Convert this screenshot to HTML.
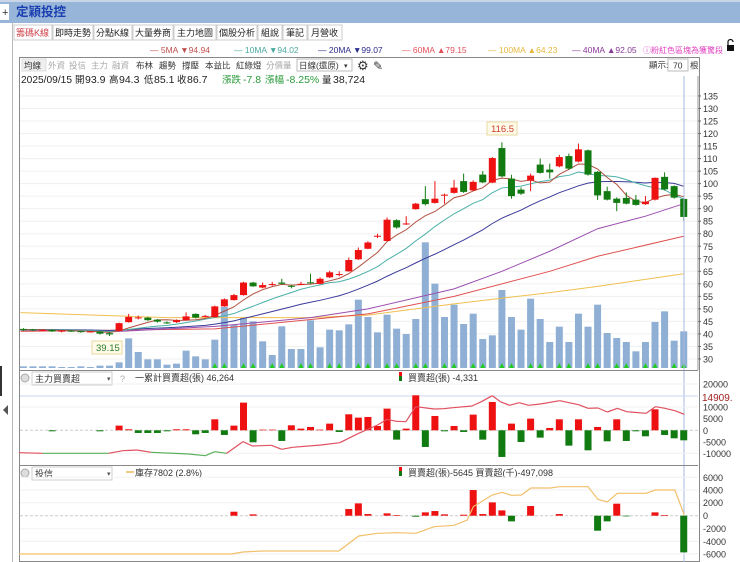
<!DOCTYPE html>
<html><head><meta charset="utf-8">
<style>
html,body{margin:0;padding:0;background:#fff;width:740px;height:562px;overflow:hidden;font-family:"Liberation Sans","Noto Sans CJK TC",sans-serif;}
svg text{font-family:"Liberation Sans","Noto Sans CJK TC",sans-serif;}
</style></head><body>
<svg id="s" width="740" height="562" xmlns="http://www.w3.org/2000/svg">
<rect x="0" y="0" width="740" height="23" fill="#97b5d9"/>
<rect x="0" y="0" width="740" height="2" fill="#c8d6e8"/>
<rect x="0" y="4" width="9" height="16" fill="#fff"/>
<text x="2" y="16" font-size="11" fill="#333">+</text>
<text x="16" y="16" font-size="12.5" font-weight="bold" fill="#1a3fb0">定穎投控</text>
<line x1="12.5" y1="23" x2="12.5" y2="562" stroke="#bbb"/>
<rect x="0" y="366" width="2" height="30" fill="#333"/>
<path d="M8 405 L3 410 L8 415Z" fill="#555"/>
<g font-size="9" fill="#222">
<rect x="14" y="25" width="38" height="15" fill="#fff" stroke="#ccc"/><text x="16" y="36" fill="#d0404a">籌碼K線</text>
<rect x="53" y="25" width="40" height="15" fill="#fff" stroke="#ccc"/><text x="55" y="36">即時走勢</text>
<rect x="94" y="25" width="38" height="15" fill="#fff" stroke="#ccc"/><text x="96" y="36">分點K線</text>
<rect x="133" y="25" width="40" height="15" fill="#fff" stroke="#ccc"/><text x="135" y="36">大量券商</text>
<rect x="174" y="25" width="42" height="15" fill="#fff" stroke="#ccc"/><text x="177" y="36">主力地圖</text>
<rect x="217" y="25" width="40" height="15" fill="#fff" stroke="#ccc"/><text x="219" y="36">個股分析</text>
<rect x="258" y="25" width="24" height="15" fill="#fff" stroke="#ccc"/><text x="261" y="36">組說</text>
<rect x="283" y="25" width="24" height="15" fill="#fff" stroke="#ccc"/><text x="286" y="36">筆記</text>
<rect x="308" y="25" width="34" height="15" fill="#fff" stroke="#ccc"/><text x="311" y="36">月營收</text>
</g>
<g font-size="8.5">
<text x="150" y="53" fill="#c0504d">—   5MA ▼94.94</text>
<text x="234" y="53" fill="#4aa8a0">—   10MA ▼94.02</text>
<text x="318" y="53" fill="#2c2c8c">—   20MA ▼99.07</text>
<text x="402" y="53" fill="#e0505a">—   60MA ▲79.15</text>
<text x="488" y="53" fill="#e8b840">—   100MA ▲64.23</text>
<text x="572" y="53" fill="#8a3a9a">—   40MA ▲92.05</text>
<text x="643" y="53" fill="#e040c0" font-size="8">ⓘ粉紅色區塊為獲驚段</text>
</g>
<rect x="727" y="45" width="7" height="6" fill="#111"/><path d="M728 45 v-3 a2.5 2.5 0 0 1 5 0" fill="none" stroke="#111" stroke-width="1.2"/>
<rect x="19.5" y="57.5" width="680" height="504" fill="none" stroke="#888"/>
<g font-size="8.5" fill="#333">
<rect x="22" y="59" width="24" height="12" fill="#eee" stroke="#ddd"/><text x="24" y="68.5">均線</text>
<text x="48" y="68.5" fill="#aaa">外資</text><text x="69" y="68.5" fill="#aaa">投信</text><text x="91" y="68.5" fill="#aaa">主力</text><text x="112" y="68.5" fill="#aaa">融資</text>
<text x="136" y="68.5">布林</text><text x="159" y="68.5">趨勢</text><text x="182" y="68.5">撐壓</text><text x="205" y="68.5">本益比</text><text x="236" y="68.5">紅綠燈</text><text x="266" y="68.5" fill="#aaa">分價量</text>
<rect x="297" y="59" width="55" height="12" fill="#fff" stroke="#bbb"/><text x="299" y="68.5">日線(還原)</text><text x="344" y="68" font-size="7">▾</text>
<text x="357" y="70" font-size="13">⚙</text><text x="373" y="70" font-size="12">✎</text>
<text x="649" y="68">顯示:</text>
<rect x="668" y="59" width="20" height="12" fill="#fff" stroke="#bbb"/><text x="673" y="68.5">70</text><text x="690" y="68.5">根</text>
</g>
<g font-size="10.5" fill="#222">
<text x="21" y="83" textLength="51" lengthAdjust="spacingAndGlyphs">2025/09/15</text><text x="75" y="83" font-size="9.5">開</text><text x="85" y="83">93.9</text>
<text x="109" y="83" font-size="9.5">高</text><text x="119" y="83">94.3</text>
<text x="144" y="83" font-size="9.5">低</text><text x="154" y="83">85.1</text>
<text x="177" y="83" font-size="9.5">收</text><text x="187" y="83">86.7</text>
<text x="222" y="83" fill="#2a9a3a" font-size="9.5">漲跌</text><text x="243" y="83" fill="#2a9a3a">-7.8</text>
<text x="265" y="83" fill="#2a9a3a" font-size="9.5">漲幅</text><text x="286" y="83" fill="#2a9a3a">-8.25%</text>
<text x="322" y="83" font-size="9.5">量</text><text x="333" y="83">38,724</text>
</g>
<g id="g"></g>
</svg>
<script>
var g=document.getElementById('g');var h='';
function X(i){return 23.4+9.57*i;}
function Y(p){return 121+(125-p)*2.505;}
for(var p=30;p<=135;p+=5){var y=Y(p);h+='<line x1="20" x2="698" y1="'+y+'" y2="'+y+'" stroke="#f0f0f0"/>';h+='<text x="703" y="'+(y+3.5)+'" font-size="9" fill="#333">'+p+'</text><line x1="698" x2="701" y1="'+y+'" y2="'+y+'" stroke="#666"/>';}
h+='<line x1="698" y1="76" x2="698" y2="370" stroke="#999"/>';
var C=[[42,41.5,42.3,41.2],[41.8,41.5,42,41.2],[41.5,41.6,41.9,41.3],[41.6,41,41.8,40.8],[41,41.3,41.5,40.6],[41.3,41.1,41.5,40.8],[41.1,40.8,41.2,40.5],[40.8,41,41.2,40.6],[40.9,40.1,41,39.8],[40.3,39.8,40.6,39.15],[41.2,44.3,44.5,41],[44.7,46.8,48,44.5],[46.5,46.6,47.3,45.8],[46.5,45.5,46.8,45.2],[45.7,44.9,45.9,44.5],[44.6,44.5,45,44],[44.7,45.5,45.8,44.4],[45.5,47,48.6,45.3],[48,46.5,48.2,46.2],[46.8,47.2,47.6,46.6],[46.7,51,51.3,46.5],[51,53.8,54.2,50.8],[53.5,55.5,56,53.3],[55.5,60.5,60.8,55.3],[60.5,59,60.8,58.8],[58.5,59.5,60.5,58.2],[59.8,59.9,60.8,59.2],[60.5,60,62,59.8],[59.2,59,59.6,58.2],[59.8,60,60.8,59.5],[60.6,60.4,64,60],[60,62,62.6,59.8],[62.6,64.6,65.2,62.3],[63.8,63.9,65,63],[65,69.5,70.5,64.8],[69.8,73.5,74.5,69.5],[74,76.5,77,73.8],[79,79.2,80,78.3],[77.1,85.6,86.5,77],[85.4,82.5,85.8,82],[84,84.1,87,83.5],[89.8,92,92.3,89.6],[93.8,91.8,99,91.3],[92.3,94,101,92],[95.5,95.6,96,92],[96.3,98.4,101.5,96],[101,96.7,104,96.3],[97.3,100.7,101.3,97],[103.6,100.5,105,100.2],[100.4,110.2,110.6,100.2],[114.2,102.9,116.5,102.5],[102,95,103.5,94],[97.6,96,98.5,95.5],[101.2,103.2,104,97],[107.6,104.3,110,104],[105.6,104.5,108,102],[106.9,110.6,111.5,106.5],[111,106,112,105.5],[108.8,113.7,116,108.5],[113.3,103.6,113.6,103.2],[104.7,95.3,105,93.5],[97,93.6,98.8,93.3],[94,92.3,94.5,89],[94.3,92,96.5,91.7],[93.6,91.5,95.5,91.2],[91.8,92.8,95,91.5],[93.6,102.3,102.5,93.3],[102.7,97.7,104.5,97.3],[99,94.4,99.3,94],[93.9,86.7,94.3,85.1]];
var V=[[770],[770],[770],[770],[772],[772],[770],[772],[768],[768],[758],[686],[727],[749],[749],[765],[762],[723],[740],[749],[690],[592],[645],[625],[635],[695],[736],[650],[718],[718],[632],[713],[660],[662],[644],[570],[622],[668],[615],[657],[673],[628],[398],[522],[622],[585],[643],[612],[688],[677],[541],[622],[660],[567],[628],[697],[651],[697],[612],[651],[585],[670],[685],[697],[725],[697],[637],[605],[693],[665]];
for(var i=0;i<70;i++){var t=V[i][0];var hh=(775-t)/3;h+='<rect x="'+(X(i)-3.5)+'" y="'+(368-hh)+'" width="7" height="'+hh+'" fill="#8fb0d4"/>';
if(i>18&&i%3!=1)h+='<path d="M'+(X(i)-2.5)+' 368 L'+X(i)+' 363 L'+(X(i)+2.5)+' 368Z" fill="#22cc22"/>';}
function ma(n,col){var cl=C.map(function(c){return c[1]});var pts=[];for(var i=0;i<70;i++){var s=0;for(var k=0;k<n;k++){var j=i-k;s+=j>=0?cl[j]:41.8;}pts.push(X(i)+','+Y(s/n));}return '<polyline points="'+pts.join(' ')+'" fill="none" stroke="'+col+'" stroke-width="1"/>';}
function hm(arr,col){var pts=arr.map(function(a){return X(a[0])+','+Y(a[1])});return '<polyline points="'+pts.join(' ')+'" fill="none" stroke="'+col+'" stroke-width="1"/>';}
h+=hm([[-0.3,48.5],[15,46.5],[30,46.5],[36,47.5],[45,52],[55,56.5],[60,59],[69,64]],'#f0c050');
h+=hm([[-0.3,41],[20,42],[36,48],[45,55],[55,65],[60,71],[69,79]],'#e05050');
h+=hm([[-0.3,41.5],[10,41],[20,43],[30,46.5],[36,50],[45,58],[50,65],[55,73],[60,82],[65,87],[69,92]],'#9b4fb0');
h+=ma(20,'#3a3a9a')+ma(10,'#4ab0a8')+ma(5,'#b05040');
for(var i=0;i<70;i++){var c=C[i];var up=c[1]>=c[0];var col=up?'#ee1111':'#117a11';var x=X(i);
h+='<line x1="'+x+'" x2="'+x+'" y1="'+Y(c[2])+'" y2="'+Y(c[3])+'" stroke="'+col+'"/>';
var t=Y(Math.max(c[0],c[1])),b=Y(Math.min(c[0],c[1]));h+='<rect x="'+(x-3.5)+'" y="'+t+'" width="7" height="'+Math.max(1,b-t)+'" fill="'+col+'"/>';}
h+='<rect x="487" y="122" width="30" height="13" fill="#fffbe8" stroke="#e8d8a0"/><text x="491" y="132" font-size="9.5" fill="#d04030">116.5</text>';
h+='<rect x="92" y="341" width="30" height="13" fill="#fffbe8" stroke="#e8d8a0"/><text x="96" y="351" font-size="9.5" fill="#2a7a2a">39.15</text>';
h+='<line x1="684" y1="76" x2="684" y2="562" stroke="#a8b8e0"/>';
h+='<line x1="20" x2="698" y1="370.5" y2="370.5" stroke="#888"/>';
h+='<circle cx="25" cy="378" r="4" fill="#ddd" stroke="#aaa"/><rect x="32" y="372" width="80" height="13" fill="#fff" stroke="#ccc"/><text x="35" y="382" font-size="9" fill="#333">主力買賣超</text><text x="107" y="381" font-size="7" fill="#555">▾</text><text x="120" y="382" font-size="9" fill="#aaa">?</text>';
h+='<text x="135" y="381" font-size="9" fill="#333">一累計買賣超(張) 46,264</text><rect x="399" y="372" width="3" height="4" fill="#e11"/><rect x="399" y="376" width="3" height="5" fill="#171"/><text x="408" y="381" font-size="9" fill="#333">買賣超(張) -4,331</text>';
var z2=430.3;[[20000,384],[10000,407],[5000,418.6],[0,430.3],[-5000,442],[-10000,453.3]].forEach(function(a){h+='<text x="703" y="'+(a[1]+3.5)+'" font-size="9" fill="#333">'+a[0]+'</text>';if(a[0]%10000==0&&a[0]!=0)h+='<line x1="20" x2="698" y1="'+a[1]+'" y2="'+a[1]+'" stroke="#f0f0f0"/>';});
h+='<line x1="20" x2="698" y1="396" y2="396" stroke="#c8d4ee"/><text x="702" y="401" font-size="10" fill="#a02020">14909.</text>';
h+='<line x1="20" x2="698" y1="'+z2+'" y2="'+z2+'" stroke="#ccc" stroke-dasharray="3,2"/>';
var B2={3:-3,8:-3,10:14,11:3,12:-8,13:-8,14:-8,15:-3,16:3,17:3,18:-12,19:-8,20:33,21:-14,22:14,23:83,24:-36,25:2,26:2,27:-32,28:15,29:5,30:10,31:2,32:20,33:-5,34:48,35:38,36:40,37:13,38:65,39:-28,40:5,41:105,42:-50,43:43,44:-3,45:13,46:-5,47:47,48:-28,49:85,50:-80,51:20,52:-35,53:35,54:-22,55:7,56:33,57:-46,58:33,59:-60,60:10,61:-33,62:33,63:-32,64:-3,65:-18,66:63,67:-14,68:-24,69:-30};
for(var k in B2){var v=B2[k]/3;var x=X(+k);if(v>0)h+='<rect x="'+(x-3.5)+'" y="'+(z2-v)+'" width="7" height="'+v+'" fill="#ee1111"/>';else h+='<rect x="'+(x-3.5)+'" y="'+z2+'" width="7" height="'+(-v)+'" fill="#117a11"/>';}
var L2=[[40,278],[90,280],[230,280],[260,272],[290,270],[320,277],[400,282],[435,287],[455,275],[480,280],[515,245],[535,258],[575,256],[597,268],[620,262],[680,255],[720,248],[760,220],[800,195],[820,178],[840,184],[860,185],[881,140],[920,147],[940,146],[960,143],[1000,138],[1020,125],[1043,107],[1060,125],[1080,136],[1100,128],[1120,136],[1145,132],[1186,122],[1226,134],[1246,145],[1267,144],[1287,156],[1308,145],[1328,155],[1369,160],[1389,140],[1409,145],[1430,152],[1450,163]];
for(var i=1;i<L2.length;i++){var a=L2[i-1],b=L2[i];var col=(a[0]>=90&&a[0]<230)||(a[0]>=320&&a[0]<480)?'#5ab05a':'#e05060';h+='<line x1="'+a[0]/2.119+'" y1="'+(360+a[1]/3)+'" x2="'+b[0]/2.119+'" y2="'+(360+b[1]/3)+'" stroke="'+col+'" stroke-width="1.2"/>';}
h+='<line x1="20" x2="698" y1="465.5" y2="465.5" stroke="#888"/>';
h+='<circle cx="25" cy="473" r="4" fill="#ddd" stroke="#aaa"/><rect x="32" y="467" width="80" height="13" fill="#fff" stroke="#ccc"/><text x="35" y="477" font-size="9" fill="#333">投信</text><text x="107" y="476" font-size="7" fill="#555">▾</text>';
h+='<line x1="126" x2="134" y1="472" y2="472" stroke="#f0b860" stroke-width="1.5"/><text x="135" y="476" font-size="9" fill="#333">庫存7802 (2.8%)</text><rect x="399" y="467" width="3" height="4" fill="#e11"/><rect x="399" y="471" width="3" height="5" fill="#171"/><text x="408" y="476" font-size="9" fill="#333">買賣超(張)-5645 買賣超(千)-497,098</text>';
var z3=515.7;[[6000,477.3],[4000,490],[2000,502.7],[0,515.7],[-2000,528.7],[-4000,541.3],[-6000,554]].forEach(function(a){h+='<text x="703" y="'+(a[1]+3.5)+'" font-size="9" fill="#333">'+a[0]+'</text>';if(a[0]!=0)h+='<line x1="20" x2="698" y1="'+a[1]+'" y2="'+a[1]+'" stroke="#f2f2f2"/>';});
h+='<line x1="20" x2="698" y1="'+z3+'" y2="'+z3+'" stroke="#ccc" stroke-dasharray="3,2"/>';
var B3={22:12,24:4,34:20,35:37,36:5,38:7,39:2,41:-3,42:10,43:14,44:4,46:3,47:77,48:5,49:40,50:16,51:-17,53:29,56:5,60:-45,61:-17,62:36,63:-2,66:10,67:2,69:-110};
for(var k in B3){var v=B3[k]/3;var x=X(+k);if(v>0)h+='<rect x="'+(x-3.5)+'" y="'+(z3-v)+'" width="7" height="'+v+'" fill="#ee1111"/>';else h+='<rect x="'+(x-3.5)+'" y="'+z3+'" width="7" height="'+(-v)+'" fill="#117a11"/>';}
var L3=[[40,582],[490,582],[515,576],[556,573],[718,573],[760,528],[800,520],[840,518],[881,520],[920,500],[962,496],[990,480],[1003,440],[1043,405],[1064,397],[1084,406],[1105,405],[1125,384],[1166,384],[1186,380],[1246,380],[1267,418],[1287,426],[1308,400],[1369,400],[1389,390],[1430,390],[1450,465]];
h+='<polyline points="'+L3.map(function(a){return a[0]/2.119+','+(360+a[1]/3)}).join(' ')+'" fill="none" stroke="#f2bf6a" stroke-width="1.2"/>';
g.innerHTML=h;
</script>
</body></html>
